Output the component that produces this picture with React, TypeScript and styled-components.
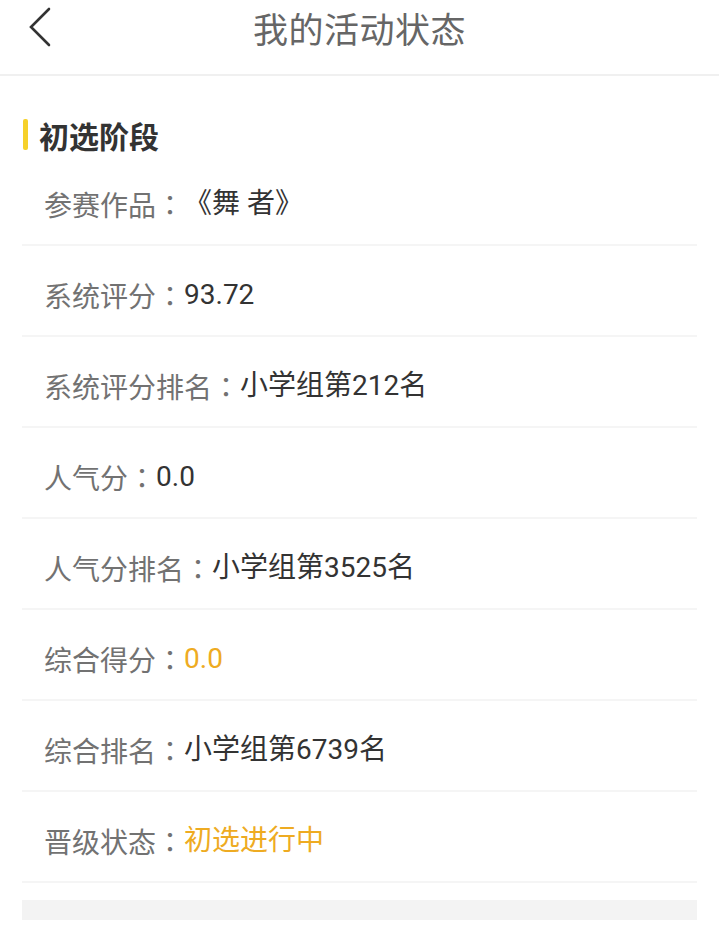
import React from "react";
import styled, { createGlobalStyle } from "styled-components";

const GlobalStyle = createGlobalStyle`
  html, body {
    margin: 0;
    padding: 0;
    background: #ffffff;
  }
  body {
    font-family: Roboto, "Noto Sans CJK SC", sans-serif;
  }
  * { box-sizing: border-box; }
`;

const Page = styled.div`
  width: 719px;
  min-height: 928px;
  background: #ffffff;
`;

const Header = styled.header`
  height: 76px;
  padding-bottom: 20px;
  display: grid;
  grid-template-columns: 1fr auto 1fr;
  align-items: center;
  border-bottom: 2px solid #f0f0f0;
`;

const BackButton = styled.button`
  justify-self: start;
  margin-left: 28px;
  padding: 0;
  border: none;
  background: transparent;
  display: flex;
  align-items: center;
  width: 26px;
  height: 40px;
`;

const Title = styled.h1`
  margin: 0;
  font-family: "Noto Sans CJK SC", sans-serif;
  font-size: 35px;
  font-weight: 400;
  color: #666666;
  letter-spacing: 0.5px;
  line-height: 1;
`;

const Content = styled.main`
  padding: 0 22px;
`;

const SectionTitle = styled.h2`
  margin: 43px 0 0 0;
  height: 31px;
  display: flex;
  align-items: center;
  gap: 11px;
  font-family: "Noto Sans CJK SC", sans-serif;
  font-size: 30px;
  font-weight: 700;
  color: #333333;
  line-height: 1;
`;

const Accent = styled.span`
  display: block;
  width: 5px;
  height: 31px;
  margin-left: 1px;
  border-radius: 2px;
  background: #f6d12a;
`;

const List = styled.div`
  margin-top: 5px;
  display: flex;
  flex-direction: column;
`;

const Row = styled.div`
  height: 91px;
  padding: 8px 0 0 22px;
  display: flex;
  align-items: center;
  border-bottom: 2px solid #f5f5f5;
  font-size: 28px;
  line-height: 1;
`;

const Label = styled.span`
  font-family: "Noto Sans CJK SC", sans-serif;
  color: #727272;
`;

const Colon = styled.span`
  font-family: "Noto Sans CJK TC", "Noto Sans CJK SC", sans-serif;
  color: #727272;
`;

const Value = styled.span<{ $accent?: boolean }>`
  font-family: Roboto, "Noto Sans CJK SC", sans-serif;
  color: ${(p) => (p.$accent ? "#eeab22" : "#333333")};
`;

const Footer = styled.div`
  margin-top: 17px;
  height: 20px;
  background: #f3f3f3;
`;

const rows: { label: string; value: string; accent?: boolean }[] = [
  { label: "参赛作品", value: "《舞 者》" },
  { label: "系统评分", value: "93.72" },
  { label: "系统评分排名", value: "小学组第212名" },
  { label: "人气分", value: "0.0" },
  { label: "人气分排名", value: "小学组第3525名" },
  { label: "综合得分", value: "0.0", accent: true },
  { label: "综合排名", value: "小学组第6739名" },
  { label: "晋级状态", value: "初选进行中", accent: true },
];

export default function App() {
  return (
    <Page>
      <GlobalStyle />
      <Header>
        <BackButton aria-label="返回">
          <svg width="26" height="40" viewBox="0 0 26 40" fill="none">
            <path
              d="M21 2 L3 20 L21 38"
              stroke="#333333"
              strokeWidth="2.6"
              strokeLinecap="round"
              strokeLinejoin="miter"
            />
          </svg>
        </BackButton>
        <Title>我的活动状态</Title>
        <span />
      </Header>
      <Content>
        <SectionTitle>
          <Accent />
          初选阶段
        </SectionTitle>
        <List>
          {rows.map((r) => (
            <Row key={r.label}>
              <Label>{r.label}</Label>
              <Colon>：</Colon>
              <Value $accent={r.accent}>{r.value}</Value>
            </Row>
          ))}
        </List>
        <Footer />
      </Content>
    </Page>
  );
}
